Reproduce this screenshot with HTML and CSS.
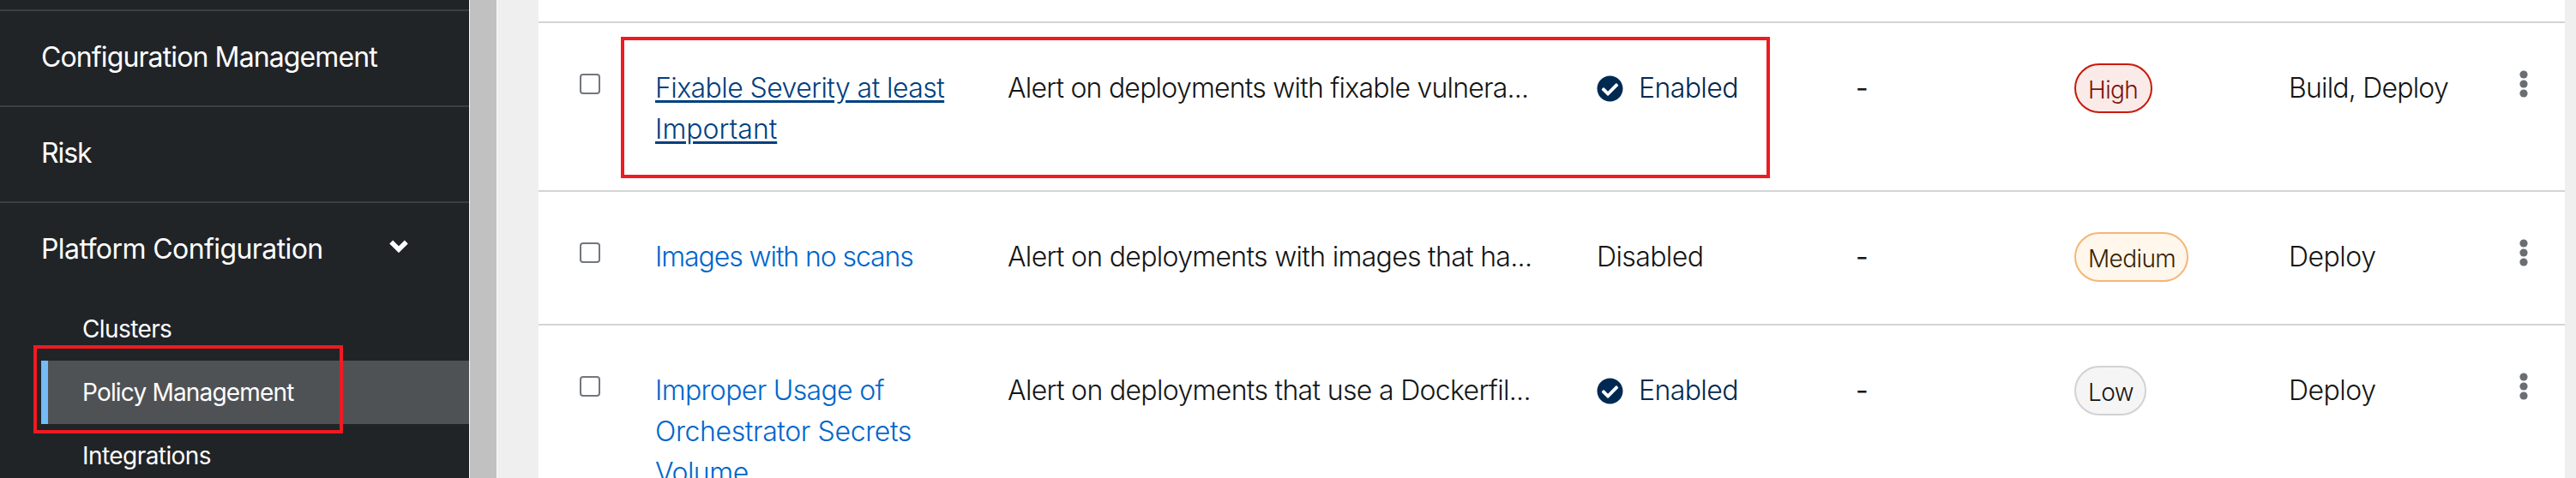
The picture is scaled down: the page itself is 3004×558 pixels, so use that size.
FILE: index.html
```html
<!DOCTYPE html>
<html lang="en">
<head>
<meta charset="utf-8">
<title>Policy Management</title>
<link rel="stylesheet" href="styles.css">
</head>
<body>
<svg class="sprite" aria-hidden="true">
  <symbol id="check" viewBox="0 0 512 512"><path d="M504 256c0 136.967-111.033 248-248 248S8 392.967 8 256 119.033 8 256 8s248 111.033 248 248zM227.314 387.314l184-184c6.248-6.248 6.248-16.379 0-22.627l-22.627-22.627c-6.248-6.249-16.379-6.249-22.628 0L216 308.118l-70.059-70.059c-6.248-6.248-16.379-6.248-22.628 0l-22.627 22.627c-6.248 6.248-6.248 16.379 0 22.627l104 104c6.249 6.249 16.379 6.249 22.628.001z"/></symbol>
  <symbol id="kebab" viewBox="0 0 10 32"><circle cx="5" cy="5" r="4.6"/><circle cx="5" cy="16" r="4.6"/><circle cx="5" cy="27" r="4.6"/></symbol>
</svg>
<div class="app">
  <nav class="sidebar">
    <a class="nav-item"><span class="cm">Configuration Management</span></a>
    <a class="nav-item"><span class="risk">Risk</span></a>
    <a class="nav-item nav-group"><span class="pc">Platform Configuration</span>
      <svg class="chevron" viewBox="0 0 24 16"><path d="M3.2 3.6 12 12.2 20.8 3.6"/></svg></a>
    <div class="subnav">
      <a class="sub-item"><span class="cl">Clusters</span></a>
      <a class="sub-item active"><span class="pm">Policy Management</span></a>
      <a class="sub-item"><span class="in">Integrations</span></a>
    </div>
    <div class="callout callout-nav"></div>
  </nav>
  <div class="scrollbar"></div>
  <main class="content">
    <div class="table">
      <div class="row row-tall">
        <span class="checkbox"></span>
        <a class="name hovered"><span class="n1">Fixable Severity at least</span><br><span class="n2">Important</span></a>
        <span class="desc d1">Alert on deployments with fixable vulnera...</span>
        <span class="status enabled"><svg class="check"><use href="#check"/></svg><span>Enabled</span></span>
        <span class="dash">-</span>
        <span class="severity"><span class="badge high">High</span></span>
        <span class="stages st1">Build, Deploy</span>
        <svg class="kebab"><use href="#kebab"/></svg>
      </div>
      <div class="row row-short">
        <span class="checkbox"></span>
        <a class="name"><span class="n3">Images with no scans</span></a>
        <span class="desc d2">Alert on deployments with images that ha...</span>
        <span class="status disabled">Disabled</span>
        <span class="dash">-</span>
        <span class="severity"><span class="badge medium">Medium</span></span>
        <span class="stages">Deploy</span>
        <svg class="kebab"><use href="#kebab"/></svg>
      </div>
      <div class="row row-last">
        <span class="checkbox"></span>
        <a class="name"><span class="n4">Improper Usage of</span><br><span class="n5">Orchestrator Secrets</span><br><span class="n6">Volume</span></a>
        <span class="desc d3">Alert on deployments that use a Dockerfil...</span>
        <span class="status enabled"><svg class="check"><use href="#check"/></svg><span>Enabled</span></span>
        <span class="dash">-</span>
        <span class="severity"><span class="badge low">Low</span></span>
        <span class="stages">Deploy</span>
        <svg class="kebab"><use href="#kebab"/></svg>
      </div>
    </div>
    <div class="callout callout-row"></div>
  </main>
</div>
</body>
</html>
```
FILE: styles.css
```css
* { box-sizing: border-box; }
body { margin: 0; font-family: Inter, "Noto Sans", sans-serif; font-size: 32px; line-height: 48px; color: #151515; }
.sprite { position: absolute; width: 0; height: 0; }
.app { display: flex; height: 558px; overflow: hidden; background: #efefef; }

.sidebar { position: relative; width: 547px; flex: none; padding-top: 11px; background: #212427; color: #fff; font-weight: 400; }
.nav-item { display: flex; height: 112px; padding: 30px 70px 0 48px; border-top: 2px solid #3c3f42; white-space: nowrap; }
.nav-group { justify-content: space-between; }
.chevron { width: 24px; height: 16px; margin-top: 12px; fill: none; stroke: #fff; stroke-width: 5.6; }
.subnav { padding-left: 48px; }
.sub-item { display: block; height: 74px; padding: 16px 0 0 48px; font-size: 28px; line-height: 42px; white-space: nowrap; }
.sub-item.active { border-left: 8px solid #73bcf7; padding-left: 40px; background: #4f5255; }
.cm { letter-spacing: -.88px; }
.risk { letter-spacing: -1.1px; }
.pc { letter-spacing: -.58px; }
.cl { letter-spacing: -.6px; }
.pm { letter-spacing: -.82px; }
.in { letter-spacing: -.56px; }

.scrollbar { width: 33px; flex: none; background: #c1c1c1; border: solid #fafafa; border-width: 0 1px; }
.content { position: relative; flex: 1; padding: 0 13px 0 48px; font-weight: 300; }
.table { height: 558px; padding-top: 25px; background: #fff; overflow: hidden; }
.row { display: grid; grid-template-columns: 88px 411px 687px 302px 255px 250px 269px 10px; padding: 47px 0 0 48px; border-top: 2px solid #d4d4d4; align-items: start; white-space: nowrap; }
.row-tall { height: 197px; }
.row-short { height: 156px; }
.row-last { height: 260px; }
.checkbox { width: 24px; height: 24px; margin-top: 12px; border: 2px solid #72767f; border-radius: 4px; background: #fff; }
.name, .desc, .status, .dash, .stages { margin-top: 5px; }
.name { color: #06c; }
.name.hovered { color: #004080; text-decoration: underline; text-decoration-thickness: 3px; text-underline-offset: 3px; }
.n1 { letter-spacing: -.57px; }
.n2 { letter-spacing: 0; }
.n3 { letter-spacing: -1.1px; }
.n4 { letter-spacing: -.67px; }
.n5 { letter-spacing: -.37px; }
.n6 { letter-spacing: -.5px; }
.d1 { letter-spacing: -.78px; }
.d2 { letter-spacing: -.69px; }
.d3 { letter-spacing: -.67px; }
.status { display: flex; align-items: center; gap: 18px; letter-spacing: -.6px; }
.stages { letter-spacing: -.5px; }
.st1 { letter-spacing: -.8px; }
.enabled { color: #002952; }
.check { width: 31px; height: 31px; fill: #002952; }
.dash { font-weight: 400; }
.severity { display: flex; }
.badge { height: 58px; padding: 14px 0 0 14px; border: 2px solid; border-radius: 30px; font-size: 28px; line-height: 30px; letter-spacing: -.6px; }
.high { width: 91px; color: #7d1007; background: #faeae8; border-color: #c9190b; }
.medium { width: 133px; color: #3b1f00; background: #fff6ec; border-color: #f4b678; }
.low { width: 84px; color: #151515; background: #f5f5f5; border-color: #d2d2d2; }
.kebab { width: 10px; height: 32px; margin-top: 8px; fill: #6a6e73; }

/* highlight frames drawn over the page */
.callout { position: absolute; border: 4px solid #f01a21; }
.callout-nav { left: 39px; top: 403px; width: 361px; height: 103px; }
.callout-row { left: 144px; top: 43px; width: 1340px; height: 165px; }
```
